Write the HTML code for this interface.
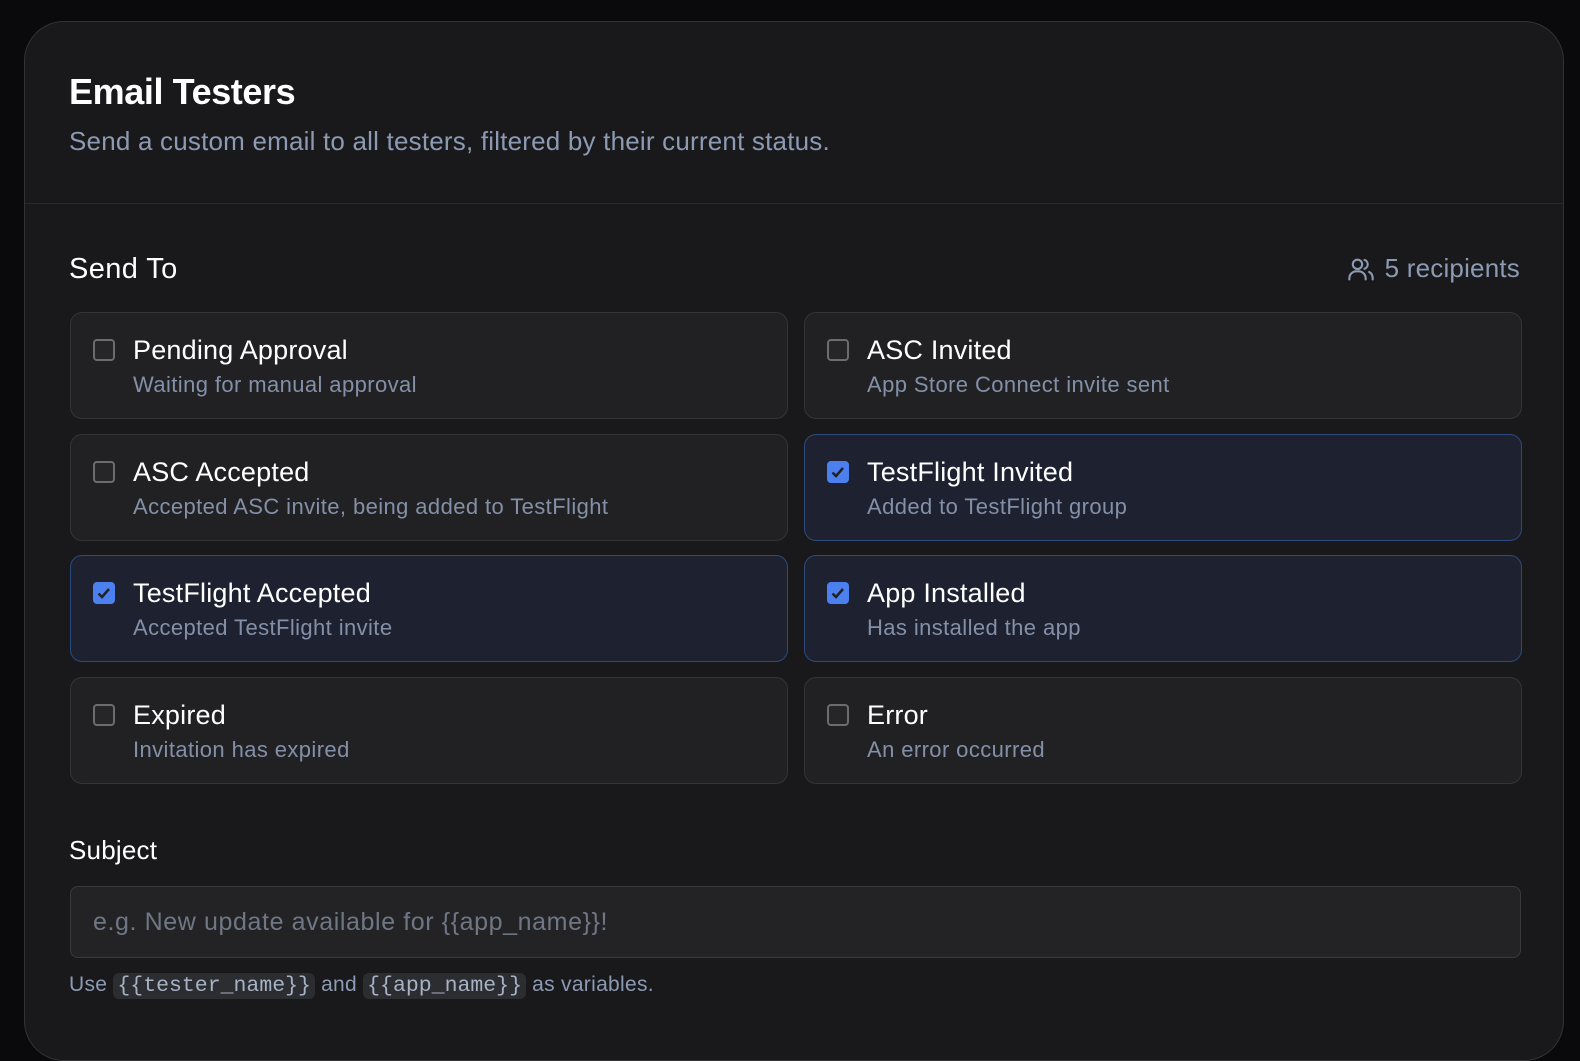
<!DOCTYPE html>
<html><head><meta charset="utf-8"><style>
*{box-sizing:border-box;margin:0;padding:0}
body{width:1580px;height:1020px;background:#0a0a0c;font-family:"Liberation Sans",sans-serif;overflow:hidden;position:relative}
.card{position:absolute;left:24px;top:21px;width:1540px;height:1040px;background:#19191b;border:1px solid #333336;border-radius:40px}
.hdr{height:182px;border-bottom:1px solid #29292c;padding:48px 0 0 44px}
h1{color:#fff;font-size:36px;font-weight:bold;letter-spacing:-0.4px;line-height:44px}
.sub{color:#8c9ab3;font-size:26px;letter-spacing:0.2px;margin-top:12px}
.st{position:absolute;left:44px;top:231px;color:#fff;font-size:29px;letter-spacing:0.4px}
.rc{position:absolute;right:43px;top:231px;color:#8c9ab3;font-size:26px;letter-spacing:0.2px;display:flex;align-items:center;gap:10px}
.opt{position:absolute;width:718px;height:107px;background:#212124;border:1px solid #343437;border-radius:12px}
.opt.on{background:#1e2230;border-color:#2c4a7c}
.cb{position:absolute;left:22px;top:26px;width:22px;height:22px;border:2px solid #6b6b70;border-radius:4px;background:#262629}
.on .cb{background:#4c80ef;border-color:#4c80ef}
.t{position:absolute;left:62px;top:22px;color:#fff;font-size:27px;letter-spacing:0.2px}
.d{position:absolute;left:62px;top:59px;color:#8390a7;font-size:22px;letter-spacing:0.4px}
.subj{position:absolute;left:44px;top:813px;color:#fff;font-size:26px;letter-spacing:0.2px}
.inp{position:absolute;left:45px;top:864px;width:1451px;height:72px;background:#232326;border:1px solid #3a3a3d;border-radius:8px;padding:21px 22px;color:#6f7785;font-size:25px;letter-spacing:0.6px}
.help{position:absolute;left:44px;top:951px;color:#8c9ab3;font-size:21px;letter-spacing:0.3px}
code{font-family:"Liberation Mono",monospace;background:#2c2d31;border-radius:6px;padding:1px 4px;font-size:21.5px;letter-spacing:0;color:#a7b2c5}
</style></head><body>
<div class="card">
<div class="hdr"><h1>Email Testers</h1><div class="sub">Send a custom email to all testers, filtered by their current status.</div></div>
<div class="st">Send To</div>
<div class="rc"><svg width="28" height="28" viewBox="0 0 24 24" fill="none" stroke="#8c9ab3" stroke-width="1.8" stroke-linecap="round"><circle cx="9" cy="8" r="4"/><path d="M2 21v-1a6 6 0 0 1 6-6h2a6 6 0 0 1 6 6v1"/><path d="M15 4.2a4 4 0 0 1 0 7.6"/><path d="M19 14.5a6 6 0 0 1 3 5.5v1"/></svg>5 recipients</div>

<div class="opt" style="left:45px;top:290px"><div class="cb"></div><div class="t">Pending Approval</div><div class="d">Waiting for manual approval</div></div>
<div class="opt" style="left:779px;top:290px"><div class="cb"></div><div class="t">ASC Invited</div><div class="d">App Store Connect invite sent</div></div>
<div class="opt" style="left:45px;top:412px"><div class="cb"></div><div class="t">ASC Accepted</div><div class="d">Accepted ASC invite, being added to TestFlight</div></div>
<div class="opt on" style="left:779px;top:412px"><div class="cb"><svg width="18" height="18" viewBox="0 0 18 18"><path d="M3.5 9.5l3.5 3.5 7-8" fill="none" stroke="#222" stroke-width="2.5"/></svg></div><div class="t">TestFlight Invited</div><div class="d">Added to TestFlight group</div></div>
<div class="opt on" style="left:45px;top:533px"><div class="cb"><svg width="18" height="18" viewBox="0 0 18 18"><path d="M3.5 9.5l3.5 3.5 7-8" fill="none" stroke="#222" stroke-width="2.5"/></svg></div><div class="t">TestFlight Accepted</div><div class="d">Accepted TestFlight invite</div></div>
<div class="opt on" style="left:779px;top:533px"><div class="cb"><svg width="18" height="18" viewBox="0 0 18 18"><path d="M3.5 9.5l3.5 3.5 7-8" fill="none" stroke="#222" stroke-width="2.5"/></svg></div><div class="t">App Installed</div><div class="d">Has installed the app</div></div>
<div class="opt" style="left:45px;top:655px"><div class="cb"></div><div class="t">Expired</div><div class="d">Invitation has expired</div></div>
<div class="opt" style="left:779px;top:655px"><div class="cb"></div><div class="t">Error</div><div class="d">An error occurred</div></div>

<div class="subj">Subject</div>
<div class="inp">e.g. New update available for {{app_name}}!</div>
<div class="help">Use <code>{{tester_name}}</code> and <code>{{app_name}}</code> as variables.</div>
</div>
</body></html>
